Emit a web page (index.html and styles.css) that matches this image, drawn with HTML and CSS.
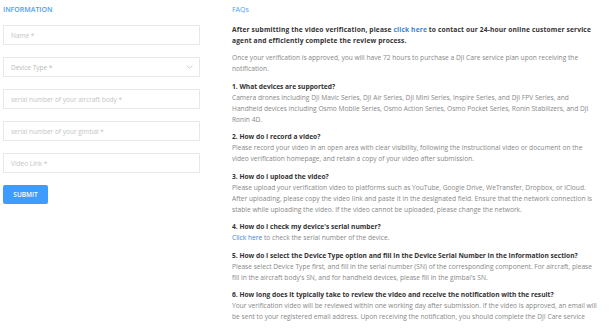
FILE: index.html
```html
<!DOCTYPE html>
<html lang="en">
<head>
    <meta charset="UTF-8">
    <meta name="viewport" content="width=device-width, initial-scale=1.0">
    <title>Video Verification</title>
    <link rel="stylesheet" href="styles.css">
</head>
<body>
    <div class="page">
        <div class="info-col">
            <h2 class="section-title upper">Information</h2>
            <form class="info-form">
                <input type="text" class="field" placeholder="Name *">
                <div class="select-wrap">
                    <select class="field select">
                        <option>Device Type *</option>
                    </select>
                    <svg class="chevron" width="7" height="4" viewBox="0 0 7 4">
                        <path d="M0.5 0.5 L3.5 3.2 L6.5 0.5" fill="none" stroke="#c8c8c8" stroke-width="0.9"/>
                    </svg>
                </div>
                <input type="text" class="field" placeholder="serial number of your aircraft body *">
                <input type="text" class="field" placeholder="serial number of your gimbal *">
                <input type="text" class="field" placeholder="Video Link *">
                <button type="button" class="submit">Submit</button>
            </form>
        </div>

        <div class="faq-col">
            <h2 class="section-title">FAQs</h2>
            <p class="lead">After submitting the video verification, please <a href="#">click here</a> to contact our 24-hour online customer service agent and efficiently complete the review process.</p>
            <p>Once your verification is approved, you will have 72 hours to purchase a DJI Care service plan upon receiving the notification.</p>

            <div class="faq-item">
                <h3>1. What devices are supported?</h3>
                <p>Camera drones including DJI Mavic Series, DJI Air Series, DJI Mini Series, Inspire Series, and DJI FPV Series, and Handheld devices including Osmo Mobile Series, Osmo Action Series, Osmo Pocket Series, Ronin Stabilizers, and DJI Ronin 4D.</p>
            </div>
            <div class="faq-item">
                <h3>2. How do I record a video?</h3>
                <p>Please record your video in an open area with clear visibility, following the instructional video or document on the video verification homepage, and retain a copy of your video after submission.</p>
            </div>
            <div class="faq-item">
                <h3>3. How do I upload the video?</h3>
                <p>Please upload your verification video to platforms such as YouTube, Google Drive, WeTransfer, Dropbox, or iCloud. After uploading, please copy the video link and paste it in the designated field. Ensure that the network connection is stable while uploading the video. If the video cannot be uploaded, please change the network.</p>
            </div>
            <div class="faq-item">
                <h3>4. How do I check my device's serial number?</h3>
                <p><a href="#">Click here</a> to check the serial number of the device.</p>
            </div>
            <div class="faq-item">
                <h3>5. How do I select the Device Type option and fill in the Device Serial Number in the Information section?</h3>
                <p>Please select Device Type first, and fill in the serial number (SN) of the corresponding component. For aircraft, please fill in the aircraft body's SN, and for handheld devices, please fill in the gimbal's SN.</p>
            </div>
            <div class="faq-item">
                <h3>6. How long does it typically take to review the video and receive the notification with the result?</h3>
                <p>Your verification video will be reviewed within one working day after submission. If the video is approved, an email will be sent to your registered email address. Upon receiving the notification, you should complete the DJI Care service plan purchase within 72 hours.</p>
            </div>
        </div>
    </div>
</body>
</html>
```

FILE: styles.css
```css
body {
    margin: 0;
    font-family: "Open Sans", Arial, sans-serif;
    background-color: #fff;
    color: #888;
    overflow: hidden;
}
.page {
    display: flex;
    align-items: flex-start;
    padding: 4px 3px 0 3px;
}
.info-col {
    width: 197px;
    flex-shrink: 0;
}
.faq-col {
    width: 365px;
    margin-left: 32px;
    max-height: 320px;
    overflow: hidden;
}
.section-title {
    margin: 0;
    font-size: 7px;
    line-height: 12px;
    font-weight: normal;
    color: #4c9ef0;
}
.section-title.upper {
    text-transform: uppercase;
    font-weight: 600;
    margin-bottom: 9px;
}
.info-form {
    display: flex;
    flex-direction: column;
    gap: 12px;
}
.field {
    display: block;
    box-sizing: border-box;
    width: 197px;
    height: 20px;
    margin: 0;
    padding: 0 7px;
    border: 1px solid #e8e8e8;
    border-radius: 0;
    background: #fff;
    font-family: "Open Sans", Arial, sans-serif;
    font-size: 6.5px;
    color: #bbb;
    outline: none;
}
.field::placeholder {
    color: #c4c4c4;
}
.select-wrap {
    position: relative;
    height: 20px;
}
.select {
    appearance: none;
    -webkit-appearance: none;
}
.chevron {
    position: absolute;
    right: 7px;
    top: 8px;
}
.submit {
    width: 45px;
    height: 19px;
    padding: 0;
    border: none;
    border-radius: 2px;
    background-color: #3d9cfd;
    color: #fff;
    font-family: "Open Sans", Arial, sans-serif;
    font-size: 6.5px;
    font-weight: 600;
    text-transform: uppercase;
}
.faq-col p,
.faq-col h3 {
    margin: 0;
    font-size: 6.65px;
    line-height: 11px;
}
.faq-col .section-title {
    margin-bottom: 7.5px;
}
.faq-col p {
    margin-bottom: 6.5px;
}
.faq-col p.lead {
    font-weight: bold;
    color: #333;
    letter-spacing: 0.15px;
}
.faq-col h3 {
    font-weight: bold;
    color: #333;
}
.faq-col a {
    color: #3a85d8;
    text-decoration: none;
}
```
